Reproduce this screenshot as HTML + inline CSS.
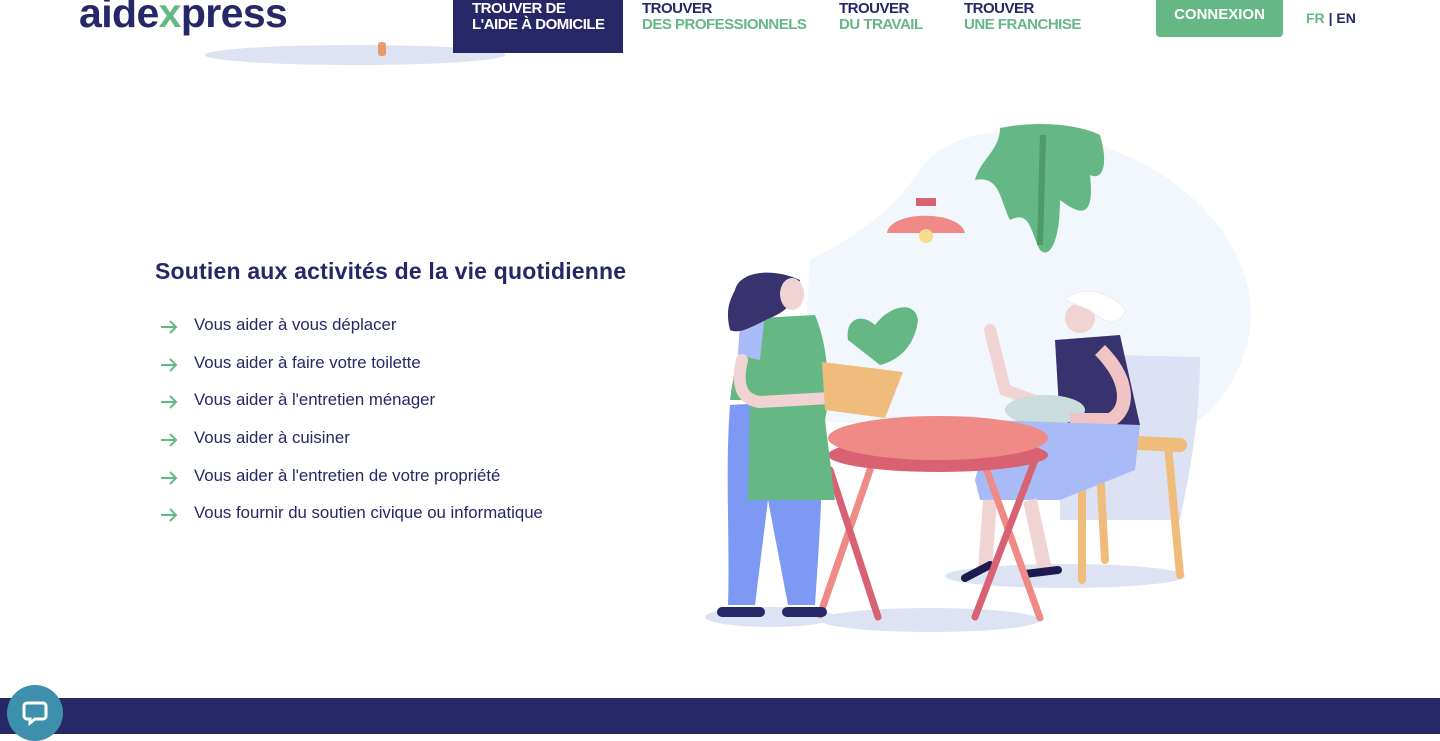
<!DOCTYPE html>
<html><head><meta charset="utf-8"><style>
*{margin:0;padding:0;box-sizing:border-box}
body{width:1440px;height:734px;overflow:hidden;background:#fff;font-family:"Liberation Sans",sans-serif;position:relative}
.a{position:absolute}
.nav{font-weight:bold;font-size:15px;line-height:16px;color:#262766;letter-spacing:-0.5px;top:1px!important}
.nav span{color:#65b883;display:block}
h2{position:absolute;left:155px;top:258px;font-size:23px;color:#262766;font-weight:bold;letter-spacing:0.2px;white-space:nowrap}
ul{position:absolute;left:160px;top:306px;list-style:none}
li{height:37.7px;font-size:16.8px;color:#262766;display:flex;align-items:center;white-space:nowrap}
li svg{margin-right:16px;margin-top:4px}
</style></head><body>
<div class="a" style="left:79px;top:-10px;font-size:41px;font-weight:bold;color:#262766;letter-spacing:-0.6px">aide<span style="color:#65b883">x</span>press</div>
<svg class="a" style="left:190px;top:30px" width="340" height="40"><ellipse cx="165" cy="25" rx="150" ry="10" fill="#dde3f3"/><rect x="188" y="12" width="8" height="14" fill="#e79a6a" rx="3"/></svg>
<div class="a" style="left:453px;top:0;width:170px;height:53px;background:#262766"></div>
<div class="a nav" style="left:472px;top:0;color:#fff">TROUVER DE<br>L'AIDE À DOMICILE</div>
<div class="a nav" style="left:642px;top:0">TROUVER<span>DES PROFESSIONNELS</span></div>
<div class="a nav" style="left:839px;top:0">TROUVER<span>DU TRAVAIL</span></div>
<div class="a nav" style="left:964px;top:0">TROUVER<span>UNE FRANCHISE</span></div>
<div class="a" style="left:1156px;top:-6px;width:127px;height:43px;background:#65b883;border-radius:4px;color:#fff;font-weight:bold;font-size:15px;text-align:center;line-height:42px">CONNEXION</div>
<div class="a" style="left:1306px;top:10px;font-weight:bold;font-size:14px;color:#65b883">FR <span style="color:#262766">| EN</span></div>

<h2>Soutien aux activités de la vie quotidienne</h2>
<ul>
<li><svg width="18" height="14" viewBox="0 0 18 14"><path d="M1 7h15M10 1l6 6-6 6" fill="none" stroke="#65b883" stroke-width="2"/></svg>Vous aider à vous déplacer</li>
<li><svg width="18" height="14" viewBox="0 0 18 14"><path d="M1 7h15M10 1l6 6-6 6" fill="none" stroke="#65b883" stroke-width="2"/></svg>Vous aider à faire votre toilette</li>
<li><svg width="18" height="14" viewBox="0 0 18 14"><path d="M1 7h15M10 1l6 6-6 6" fill="none" stroke="#65b883" stroke-width="2"/></svg>Vous aider à l'entretien ménager</li>
<li><svg width="18" height="14" viewBox="0 0 18 14"><path d="M1 7h15M10 1l6 6-6 6" fill="none" stroke="#65b883" stroke-width="2"/></svg>Vous aider à cuisiner</li>
<li><svg width="18" height="14" viewBox="0 0 18 14"><path d="M1 7h15M10 1l6 6-6 6" fill="none" stroke="#65b883" stroke-width="2"/></svg>Vous aider à l'entretien de votre propriété</li>
<li><svg width="18" height="14" viewBox="0 0 18 14"><path d="M1 7h15M10 1l6 6-6 6" fill="none" stroke="#65b883" stroke-width="2"/></svg>Vous fournir du soutien civique ou informatique</li>
</ul>

<svg class="a" style="left:0;top:0" width="1440" height="734">
<path d="M810 260 C870 230 900 200 920 170 C950 130 1000 125 1080 140 C1200 170 1260 260 1250 330 C1240 390 1200 430 1160 440 L800 420 Z" fill="#f1f7fc"/>
<ellipse cx="770" cy="617" rx="65" ry="10" fill="#dde3f3"/>
<ellipse cx="930" cy="620" rx="110" ry="12" fill="#dde3f3"/>
<ellipse cx="1065" cy="576" rx="120" ry="12" fill="#dde3f3"/>
<path d="M1110 355 L1200 357 C1200 420 1190 470 1180 520 L1060 520 L1060 360 Z" fill="#dce2f3"/>
<path d="M1075 440 L1180 445" stroke="#efbc7c" stroke-width="14" stroke-linecap="round"/>
<path d="M1082 445 L1082 580 M1168 445 L1180 575 M1100 470 L1105 560" stroke="#efbc7c" stroke-width="8" stroke-linecap="round"/>
<path d="M1000 128 C1040 120 1080 125 1100 135 C1110 170 1100 180 1090 175 C1095 220 1080 215 1060 200 C1060 240 1050 260 1040 250 C1030 230 1030 210 1010 220 C1000 200 1000 175 975 180 C980 160 1000 150 1000 128Z" fill="#65b883"/>
<path d="M1043 135 L1040 245" stroke="#509968" stroke-width="6"/>
<rect x="916" y="198" width="20" height="8" fill="#d96272"/>
<path d="M887 233 C890 210 960 210 965 233 Z" fill="#ef8a86"/>
<circle cx="926" cy="236" r="7" fill="#f8dc8c"/>
<path d="M1055 340 L1120 335 L1140 425 L1060 425 Z" fill="#38336f"/>
<circle cx="1080" cy="318" r="15" fill="#f2d3d3"/>
<path d="M1065 300 C1080 285 1110 290 1125 310 C1120 330 1100 320 1090 310 Z" fill="#fff" stroke="#eee"/>
<path d="M990 330 L1005 390 L1060 410" stroke="#f2d3d3" stroke-width="12" fill="none" stroke-linecap="round"/>
<ellipse cx="1045" cy="410" rx="40" ry="15" fill="#cadcdc"/>
<path d="M1100 350 C1130 380 1130 410 1110 420 L1070 420" stroke="#f0c4c4" stroke-width="14" fill="none"/>
<path d="M975 480 L990 420 L1140 425 L1135 470 L1060 500 L980 500 Z" fill="#a9bbf7"/>
<path d="M990 500 L985 570 M1030 500 L1045 570" stroke="#f2d3d3" stroke-width="14"/>
<path d="M965 578 L990 565 M1025 574 L1058 570" stroke="#1f1a4e" stroke-width="8" stroke-linecap="round"/>
<path d="M870 470 L820 615 M985 465 L1040 618" stroke="#ef8a86" stroke-width="7" stroke-linecap="round"/>
<path d="M830 470 L878 617 M1035 460 L975 617" stroke="#d96272" stroke-width="7" stroke-linecap="round"/>
<ellipse cx="938" cy="455" rx="110" ry="17" fill="#d96272"/>
<ellipse cx="938" cy="438" rx="110" ry="22" fill="#ef8a86"/>
<path d="M730 405 C725 470 730 540 728 605 L755 605 L768 500 L788 605 L815 605 C820 530 825 460 820 400 Z" fill="#7d99f4"/>
<path d="M760 318 L815 315 C830 350 830 400 825 420 L835 500 L748 500 L750 400 L730 400 C735 360 745 330 760 318Z" fill="#65b883"/>
<path d="M740 320 L765 312 L760 360 L738 355 Z" fill="#a9bbf7"/>
<path d="M735 290 C740 270 775 268 800 280 C795 300 790 310 770 318 C755 325 740 335 730 330 C725 310 730 300 735 290 Z" fill="#38336f"/>
<ellipse cx="792" cy="294" rx="12" ry="16" fill="#f2d3d3"/>
<path d="M742 360 C735 390 745 400 760 402 L830 398" stroke="#f2d3d3" stroke-width="12" fill="none" stroke-linecap="round"/>
<path d="M848 340 C845 320 860 312 875 325 C890 305 915 300 918 320 C915 345 900 360 880 365 Z" fill="#65b883"/>
<path d="M822 362 L903 372 L885 418 L825 410 Z" fill="#efbc7c"/>
<path d="M722 612 L760 612 M787 612 L822 612" stroke="#262766" stroke-width="10" stroke-linecap="round"/>
</svg>

<div class="a" style="left:0;top:698px;width:1440px;height:36px;background:#262766"></div>
<div class="a" style="left:7px;top:685px;width:56px;height:56px;border-radius:50%;background:#3e8fac"></div>
<svg class="a" style="left:21px;top:699px" width="28" height="28" viewBox="0 0 28 28"><path d="M6 4h16a3 3 0 0 1 3 3v10a3 3 0 0 1-3 3H14l-5 4v-4H6a3 3 0 0 1-3-3V7a3 3 0 0 1 3-3z" fill="none" stroke="#fff" stroke-width="3"/></svg>
</body></html>
